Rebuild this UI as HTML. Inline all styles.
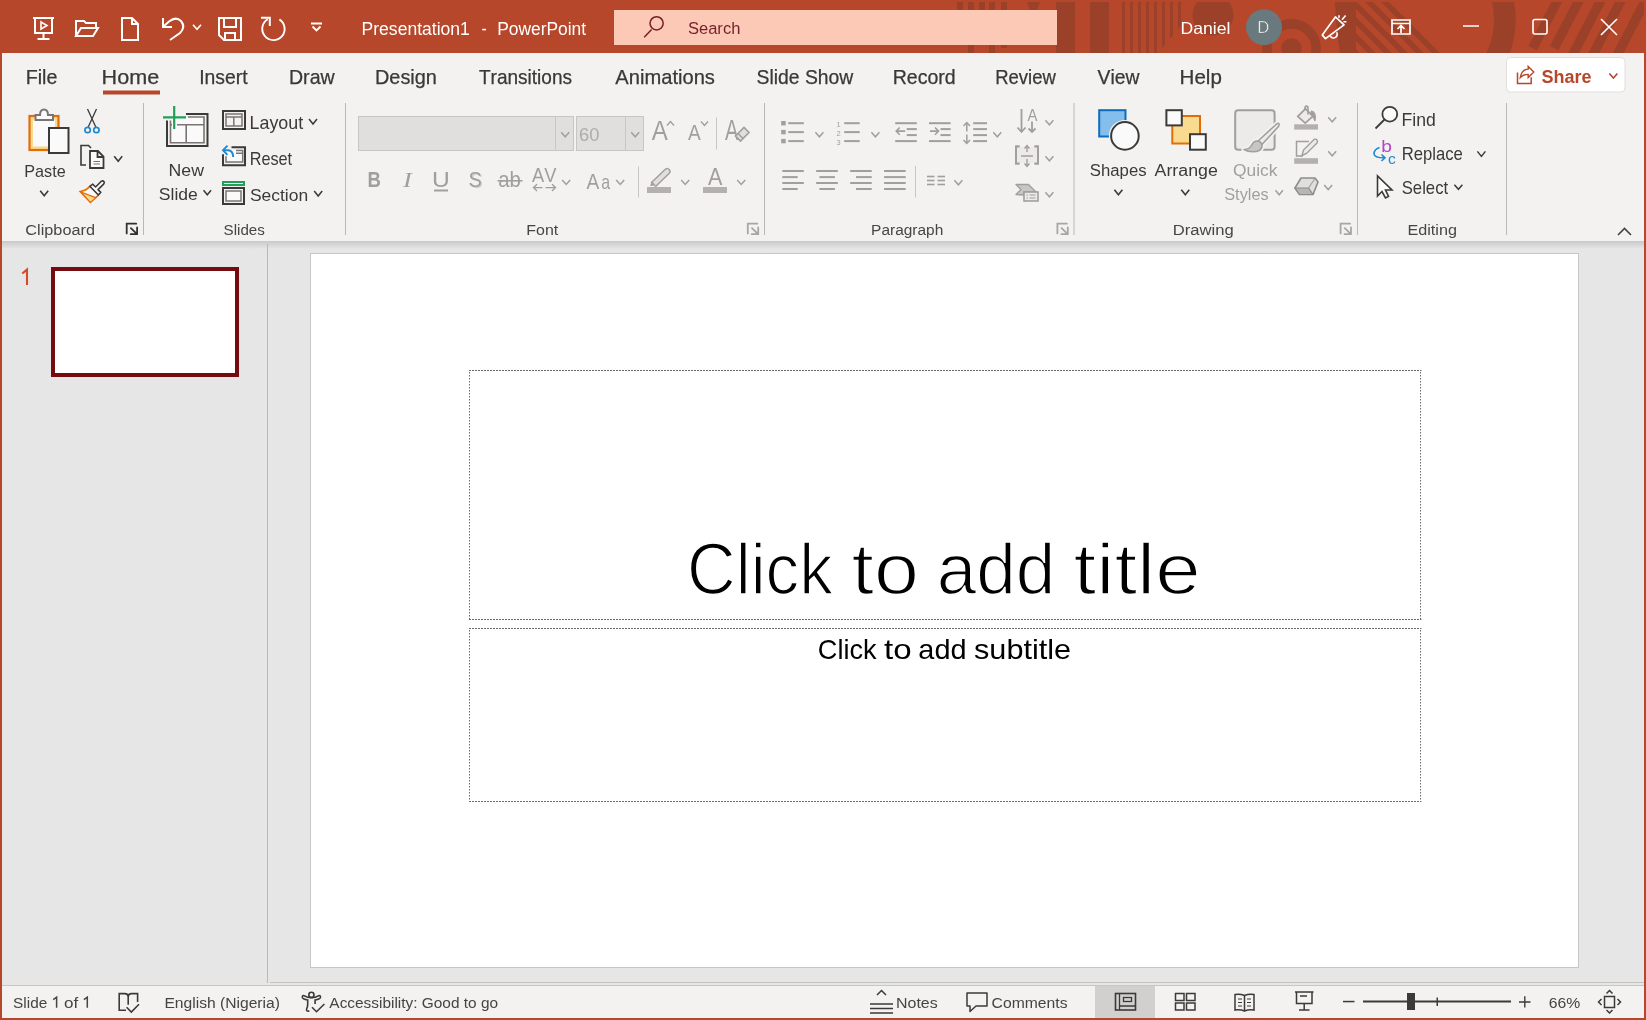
<!DOCTYPE html>
<html><head><meta charset="utf-8">
<style>
*{margin:0;padding:0}
html,body{width:1646px;height:1020px;overflow:hidden;background:#B7472A}
svg{position:absolute;left:0;top:0;display:block;will-change:transform}
text{font-kerning:none;white-space:pre}
</style></head><body>
<svg width="1646" height="1020" viewBox="0 0 1646 1020">
<rect x="0" y="0" width="1646" height="1020" fill="#B7472A" />
<rect x="2" y="53" width="1642" height="188" fill="#F3F2F1" />
<rect x="2" y="241" width="1642" height="745" fill="#E6E6E6" />
<defs><linearGradient id="sh" x1="0" y1="0" x2="0" y2="1"><stop offset="0" stop-color="#C9C9C9"/><stop offset="1" stop-color="#E6E6E6"/></linearGradient></defs>
<rect x="2" y="241" width="1642" height="8" fill="url(#sh)" />
<rect x="2" y="985" width="1642" height="1" fill="#C8C6C4" />
<rect x="2" y="986" width="1642" height="32" fill="#F3F2F1" />
<rect x="267" y="244" width="1" height="739" fill="#B9B9B9" />
<rect x="270" y="982" width="1374" height="1" fill="#C2C2C2" />
<defs><clipPath id="tbc"><rect x="0" y="2" width="1644" height="51"/></clipPath></defs><g clip-path="url(#tbc)" fill="#9C4129">
<rect x="957" y="2" width="6" height="9" fill="#9C4129" />
<rect x="968" y="2" width="6" height="9" fill="#9C4129" />
<rect x="979" y="2" width="6" height="9" fill="#9C4129" />
<rect x="989" y="2" width="6" height="9" fill="#9C4129" />
<rect x="1001" y="2" width="6" height="9" fill="#9C4129" />
<rect x="968" y="44" width="6" height="9" fill="#9C4129" />
<rect x="989" y="44" width="6" height="9" fill="#9C4129" />
<rect x="1001" y="44" width="6" height="4" fill="#9C4129" />
<polygon points="1027,2 1040,2 1037,10 1030,10"/>
<rect x="1056" y="2" width="19" height="51" fill="#9C4129" />
<rect x="1090" y="2" width="19" height="51" fill="#9C4129" />
<clipPath id="thin"><polygon points="1100,0 1190,0 1190,15 1158,53 1100,53"/></clipPath><g clip-path="url(#thin)">
<rect x="1122" y="2" width="3" height="51" fill="#9C4129" />
<rect x="1130" y="2" width="3" height="51" fill="#9C4129" />
<rect x="1138" y="2" width="3" height="51" fill="#9C4129" />
<rect x="1146" y="2" width="3" height="51" fill="#9C4129" />
<rect x="1154" y="2" width="3" height="51" fill="#9C4129" />
<rect x="1162" y="2" width="3" height="51" fill="#9C4129" />
<rect x="1170" y="2" width="3" height="51" fill="#9C4129" />
<rect x="1178" y="2" width="3" height="51" fill="#9C4129" />
</g>
<circle cx="1213" cy="15" r="20.5"/>
<circle cx="1291.5" cy="48.5" r="24.6" fill="none" stroke="#9C4129" stroke-width="9.6"/>
<circle cx="1291.5" cy="48.5" r="10.3"/>
<path d="M1335,2 L1357,2 L1356,10 L1356,53 L1340,53 Q1336,30 1335,2 Z"/>
<clipPath id="dg"><polygon points="1356,2 1400,2 1451,53 1356,53"/></clipPath><g clip-path="url(#dg)">
<polygon points="1301,2 1309,2 1360,53 1352,53"/>
<polygon points="1317,2 1325,2 1376,53 1368,53"/>
<polygon points="1333,2 1341,2 1392,53 1384,53"/>
<polygon points="1349,2 1357,2 1408,53 1400,53"/>
<polygon points="1365,2 1373,2 1424,53 1416,53"/>
<polygon points="1381,2 1389,2 1440,53 1432,53"/>
</g>
<clipPath id="arc"><rect x="1400" y="2" width="200" height="51"/></clipPath><circle cx="1422" cy="20" r="82.9" fill="none" stroke="#9C4129" stroke-width="21.7" clip-path="url(#arc)"/>
<polygon points="1551.4,2 1562.1000000000001,2 1536.8990196078432,50.5 1528.537254901961,46"/>
<polygon points="1572.8,2 1583.5,2 1558.299019607843,50.5 1549.9372549019608,46"/>
<polygon points="1594.7,2 1605.4,2 1578.9,53 1568.2,53"/>
<polygon points="1614.9,2 1625.6000000000001,2 1599.1000000000001,53 1588.4,53"/>
<polygon points="1639.4,2 1650.1000000000001,2 1623.6000000000001,53 1612.9,53"/>
</g>
<path d="M33,18 H54 M35,18 V33 H52 V18 M43.5,33 V39 M37.5,39 H49.5" stroke="#FFFFFF" stroke-width="2" fill="none" />
<path d="M41,22 L47,25.5 L41,29 Z" stroke="#FFFFFF" stroke-width="1.6" fill="none" />
<path d="M76,36 V21 H84 L86,23 H96 V28 M76,36 L81,28 H98 L93,36 Z" stroke="#FFFFFF" stroke-width="2" fill="none" stroke-linejoin="miter"/>
<path d="M122,18 H132 L138,24 V40 H122 Z M132,18 V24 H138" stroke="#FFFFFF" stroke-width="2" fill="none" />
<path d="M163,18 V27 H172 M163.5,26.5 L169,21.5 Q176,16 181,21 Q186,27 180,33 L170,40" stroke="#FFFFFF" stroke-width="2" fill="none" />
<path d="M193.0,24.75 L197,29.25 L201.0,24.75" stroke="#FFFFFF" stroke-width="1.6" fill="none" stroke-linecap="butt" stroke-linejoin="miter"/>
<path d="M219,18 H241 V40 H224 L219,35 Z M224,18 V27 H236 V18 M225,40 V33 H235 V40" stroke="#FFFFFF" stroke-width="2" fill="none" />
<path d="M261,17.8 H269.8 V26" stroke="#FFFFFF" stroke-width="2" fill="none" />
<path d="M279.4,19.4 A11.2,11.2 0 1 1 267.8,19.2" stroke="#FFFFFF" stroke-width="1.9" fill="none" />
<path d="M311,23.5 H322" stroke="#FFFFFF" stroke-width="2" fill="none" />
<path d="M312.5,26.5 L316.5,30.5 L320.5,26.5" stroke="#FFFFFF" stroke-width="1.8" fill="none" stroke-linecap="butt" stroke-linejoin="miter"/>
<text x="361.56" y="34.80" font-family="Liberation Sans" font-size="17.48" font-weight="normal" font-style="normal" fill="#FFFFFF" textLength="108.30" lengthAdjust="spacingAndGlyphs" >Presentation1</text>
<text x="481.51" y="34.80" font-family="Liberation Sans" font-size="18.53" font-weight="normal" font-style="normal" fill="#FFFFFF" textLength="5.18" lengthAdjust="spacingAndGlyphs" >-</text>
<text x="497.17" y="34.80" font-family="Liberation Sans" font-size="17.48" font-weight="normal" font-style="normal" fill="#FFFFFF" textLength="88.95" lengthAdjust="spacingAndGlyphs" >PowerPoint</text>
<rect x="614" y="10" width="443" height="35" fill="#FBC9B5" />
<path d="M644.2,37.3 L651.6,29.6" stroke="#781E2A" stroke-width="1.5" fill="none" />
<circle cx="656.6" cy="23.3" r="6.6" fill="none" stroke="#781E2A" stroke-width="1.5"/>
<text x="687.95" y="33.70" font-family="Liberation Sans" font-size="17.27" font-weight="normal" font-style="normal" fill="#781E2A" textLength="52.43" lengthAdjust="spacingAndGlyphs" >Search</text>
<text x="1180.56" y="33.90" font-family="Liberation Sans" font-size="17.13" font-weight="normal" font-style="normal" fill="#FFFFFF" textLength="49.92" lengthAdjust="spacingAndGlyphs" >Daniel</text>
<circle cx="1264" cy="27.2" r="18" fill="#69797E"/>
<text x="1257.33" y="33.30" font-family="Liberation Sans" font-size="16.72" font-weight="normal" font-style="normal" fill="#FFFFFF" textLength="12.07" lengthAdjust="spacingAndGlyphs"  stroke="#69797E" stroke-width="0.6">D</text>
<path d="M1322.3,35.1 L1335.4,16.9 L1344,24.9 L1325.5,38.6 Z" stroke="#FFFFFF" stroke-width="1.7" fill="none" stroke-linejoin="round"/>
<path d="M1330.3,36.3 A3.3,3.3 0 1 0 1336.6,32.2" stroke="#FFFFFF" stroke-width="1.6" fill="none" />
<path d="M1339,15.2 V17.8 M1342,19.8 L1345.6,15.6 M1343.4,21.7 H1346.4" stroke="#FFFFFF" stroke-width="1.6" fill="none" />
<path d="M1392,20 H1410 V34 H1392 Z M1392,23.5 H1410 M1401,33 V26 M1397.5,29 L1401,25.5 L1404.5,29" stroke="#FFFFFF" stroke-width="1.7" fill="none" />
<path d="M1463,26 H1479" stroke="#FFFFFF" stroke-width="1.5" fill="none" />
<rect x="1533" y="19.5" width="14" height="14.5" rx="2" fill="none" stroke="#FFFFFF" stroke-width="1.6"/>
<path d="M1601,19 L1617,35 M1617,19 L1601,35" stroke="#FFFFFF" stroke-width="1.6" fill="none" />
<text x="25.69" y="83.90" font-family="Liberation Sans" font-size="19.45" font-weight="normal" font-style="normal" fill="#383838" textLength="31.69" lengthAdjust="spacingAndGlyphs" stroke="#383838" stroke-width="0.25">File</text>
<text x="101.63" y="83.90" font-family="Liberation Sans" font-size="19.45" font-weight="normal" font-style="normal" fill="#383838" textLength="57.53" lengthAdjust="spacingAndGlyphs" stroke="#383838" stroke-width="0.25">Home</text>
<text x="199.21" y="83.90" font-family="Liberation Sans" font-size="19.45" font-weight="normal" font-style="normal" fill="#383838" textLength="48.43" lengthAdjust="spacingAndGlyphs" stroke="#383838" stroke-width="0.25">Insert</text>
<text x="288.99" y="83.90" font-family="Liberation Sans" font-size="19.45" font-weight="normal" font-style="normal" fill="#383838" textLength="45.66" lengthAdjust="spacingAndGlyphs" stroke="#383838" stroke-width="0.25">Draw</text>
<text x="374.97" y="83.90" font-family="Liberation Sans" font-size="19.45" font-weight="normal" font-style="normal" fill="#383838" textLength="61.92" lengthAdjust="spacingAndGlyphs" stroke="#383838" stroke-width="0.25">Design</text>
<text x="478.97" y="83.90" font-family="Liberation Sans" font-size="19.45" font-weight="normal" font-style="normal" fill="#383838" textLength="93.01" lengthAdjust="spacingAndGlyphs" stroke="#383838" stroke-width="0.25">Transitions</text>
<text x="615.36" y="83.90" font-family="Liberation Sans" font-size="19.45" font-weight="normal" font-style="normal" fill="#383838" textLength="99.57" lengthAdjust="spacingAndGlyphs" stroke="#383838" stroke-width="0.25">Animations</text>
<text x="756.62" y="83.90" font-family="Liberation Sans" font-size="19.45" font-weight="normal" font-style="normal" fill="#383838" textLength="96.73" lengthAdjust="spacingAndGlyphs" stroke="#383838" stroke-width="0.25">Slide Show</text>
<text x="892.70" y="83.90" font-family="Liberation Sans" font-size="19.45" font-weight="normal" font-style="normal" fill="#383838" textLength="62.96" lengthAdjust="spacingAndGlyphs" stroke="#383838" stroke-width="0.25">Record</text>
<text x="995.18" y="83.90" font-family="Liberation Sans" font-size="19.45" font-weight="normal" font-style="normal" fill="#383838" textLength="60.57" lengthAdjust="spacingAndGlyphs" stroke="#383838" stroke-width="0.25">Review</text>
<text x="1097.61" y="83.90" font-family="Liberation Sans" font-size="19.45" font-weight="normal" font-style="normal" fill="#383838" textLength="41.94" lengthAdjust="spacingAndGlyphs" stroke="#383838" stroke-width="0.25">View</text>
<text x="1179.61" y="83.90" font-family="Liberation Sans" font-size="19.45" font-weight="normal" font-style="normal" fill="#383838" textLength="42.25" lengthAdjust="spacingAndGlyphs" stroke="#383838" stroke-width="0.25">Help</text>
<rect x="103" y="90.5" width="57" height="4" fill="#B7472A" />
<rect x="1506.5" y="57.5" width="118.5" height="34.5" rx="4" fill="#FFFFFF" stroke="#E1DFDD" stroke-width="1"/>
<path d="M1517.5,72.6 V83.4 H1531.2 V77.2" stroke="#B7472A" stroke-width="1.5" fill="none" />
<path d="M1520.3,77.6 Q1521.5,69.4 1528.2,69.1 V66.5 L1533.8,72.1 L1528.2,77.6 V74.4 Q1523.5,74.2 1520.3,77.6 Z" stroke="#B7472A" stroke-width="1.4" fill="none" stroke-linejoin="miter"/>
<text x="1541.48" y="82.80" font-family="Liberation Sans" font-size="18.59" font-weight="bold" font-style="normal" fill="#B7472A" textLength="50.03" lengthAdjust="spacingAndGlyphs" >Share</text>
<path d="M1609.4,73.45 L1613.4,77.95 L1617.4,73.45" stroke="#B7472A" stroke-width="1.6" fill="none" stroke-linecap="butt" stroke-linejoin="miter"/>
<text x="25.37" y="234.90" font-family="Liberation Sans" font-size="14.89" font-weight="normal" font-style="normal" fill="#484644" textLength="69.57" lengthAdjust="spacingAndGlyphs" >Clipboard</text>
<text x="223.61" y="234.90" font-family="Liberation Sans" font-size="14.89" font-weight="normal" font-style="normal" fill="#484644" textLength="41.23" lengthAdjust="spacingAndGlyphs" >Slides</text>
<text x="526.29" y="234.90" font-family="Liberation Sans" font-size="14.89" font-weight="normal" font-style="normal" fill="#484644" textLength="31.93" lengthAdjust="spacingAndGlyphs" >Font</text>
<text x="871.13" y="234.90" font-family="Liberation Sans" font-size="14.89" font-weight="normal" font-style="normal" fill="#484644" textLength="72.17" lengthAdjust="spacingAndGlyphs" >Paragraph</text>
<text x="1172.84" y="234.90" font-family="Liberation Sans" font-size="14.89" font-weight="normal" font-style="normal" fill="#484644" textLength="60.93" lengthAdjust="spacingAndGlyphs" >Drawing</text>
<text x="1407.47" y="234.90" font-family="Liberation Sans" font-size="14.89" font-weight="normal" font-style="normal" fill="#484644" textLength="49.47" lengthAdjust="spacingAndGlyphs" >Editing</text>
<rect x="143.0" y="103" width="1" height="132" fill="#BAB8B6" />
<rect x="345.0" y="103" width="1" height="132" fill="#BAB8B6" />
<rect x="764.0" y="103" width="1" height="132" fill="#BAB8B6" />
<rect x="1073.5" y="103" width="1" height="132" fill="#BAB8B6" />
<rect x="1357.0" y="103" width="1" height="132" fill="#BAB8B6" />
<rect x="1506.0" y="103" width="1" height="132" fill="#BAB8B6" />
<path d="M1618,235 L1624.5,228.5 L1631,235" stroke="#444" stroke-width="1.6" fill="none" />
<path d="M126.7,233.4 V223.7 H136.2" stroke="#323130" stroke-width="1.8" fill="none" stroke-linecap="round"/>
<path d="M130.9,228.2 L136.5,233.6 M137.1,227.5 V234.2 H130.7" stroke="#323130" stroke-width="1.8" fill="none" stroke-linecap="round" stroke-linejoin="round"/>
<path d="M747.8,233.4 V223.7 H757.3" stroke="#A8A6A4" stroke-width="1.8" fill="none" stroke-linecap="round"/>
<path d="M752.0,228.2 L757.5999999999999,233.6 M758.1999999999999,227.5 V234.2 H751.8" stroke="#A8A6A4" stroke-width="1.8" fill="none" stroke-linecap="round" stroke-linejoin="round"/>
<path d="M1057.4,233.4 V223.7 H1066.9" stroke="#A8A6A4" stroke-width="1.8" fill="none" stroke-linecap="round"/>
<path d="M1061.6000000000001,228.2 L1067.2,233.6 M1067.8000000000002,227.5 V234.2 H1061.4" stroke="#A8A6A4" stroke-width="1.8" fill="none" stroke-linecap="round" stroke-linejoin="round"/>
<path d="M1340.6,233.4 V223.7 H1350.1" stroke="#A8A6A4" stroke-width="1.8" fill="none" stroke-linecap="round"/>
<path d="M1344.8,228.2 L1350.3999999999999,233.6 M1351.0,227.5 V234.2 H1344.6" stroke="#A8A6A4" stroke-width="1.8" fill="none" stroke-linecap="round" stroke-linejoin="round"/>
<rect x="310.5" y="253.5" width="1268" height="714" fill="#FFFFFF" stroke="#C6C6C6" stroke-width="1"/>
<rect x="53" y="269" width="184" height="106" fill="#FFFFFF" stroke="#750B0E" stroke-width="4"/>
<path d="M22.3,273.5 L27,269.6 V285" stroke="#D84A27" stroke-width="2.1" fill="none" stroke-linejoin="miter"/>
<path d="M469,370.5 H1421.5 M469,619.5 H1421.5" stroke="#6A6A6A" stroke-width="1" fill="none" stroke-dasharray="2,1"/>
<path d="M469.5,372.0 V619.5 M1420.5,372.0 V619.5" stroke="#6A6A6A" stroke-width="1" fill="none" stroke-dasharray="1.5,1.5"/>
<path d="M469,628.5 H1421.5 M469,801.5 H1421.5" stroke="#6A6A6A" stroke-width="1" fill="none" stroke-dasharray="2,1"/>
<path d="M469.5,630.0 V801.5 M1420.5,630.0 V801.5" stroke="#6A6A6A" stroke-width="1" fill="none" stroke-dasharray="1.5,1.5"/>
<text x="687.08" y="593.60" font-family="Liberation Sans" font-size="72.74" font-weight="normal" font-style="normal" fill="#000000" textLength="145.82" lengthAdjust="spacingAndGlyphs"  stroke="#FFFFFF" stroke-width="1.6">Click</text>
<text x="851.58" y="593.60" font-family="Liberation Sans" font-size="72.74" font-weight="normal" font-style="normal" fill="#000000" textLength="67.42" lengthAdjust="spacingAndGlyphs"  stroke="#FFFFFF" stroke-width="1.6">to</text>
<text x="936.68" y="593.60" font-family="Liberation Sans" font-size="72.74" font-weight="normal" font-style="normal" fill="#000000" textLength="118.71" lengthAdjust="spacingAndGlyphs"  stroke="#FFFFFF" stroke-width="1.6">add</text>
<text x="1073.56" y="593.60" font-family="Liberation Sans" font-size="72.74" font-weight="normal" font-style="normal" fill="#000000" textLength="127.17" lengthAdjust="spacingAndGlyphs"  stroke="#FFFFFF" stroke-width="1.6">title</text>
<text x="817.82" y="658.80" font-family="Liberation Sans" font-size="27.77" font-weight="normal" font-style="normal" fill="#000000" textLength="58.74" lengthAdjust="spacingAndGlyphs" >Click</text>
<text x="884.00" y="658.80" font-family="Liberation Sans" font-size="27.77" font-weight="normal" font-style="normal" fill="#000000" textLength="27.59" lengthAdjust="spacingAndGlyphs" >to</text>
<text x="918.37" y="658.80" font-family="Liberation Sans" font-size="27.77" font-weight="normal" font-style="normal" fill="#000000" textLength="48.19" lengthAdjust="spacingAndGlyphs" >add</text>
<text x="974.05" y="658.80" font-family="Liberation Sans" font-size="27.77" font-weight="normal" font-style="normal" fill="#000000" textLength="97.11" lengthAdjust="spacingAndGlyphs" >subtitle</text>
<text x="13.10" y="1007.80" font-family="Liberation Sans" font-size="15.07" font-weight="normal" font-style="normal" fill="#444" textLength="34.18" lengthAdjust="spacingAndGlyphs" >Slide</text>
<text x="63.99" y="1007.80" font-family="Liberation Sans" font-size="15.07" font-weight="normal" font-style="normal" fill="#444" textLength="14.19" lengthAdjust="spacingAndGlyphs" >of</text>
<path d="M53.2,999.6 L56.6,997.2 V1007.8 M83.9,999.6 L87.3,997.2 V1007.8" stroke="#444" stroke-width="1.5" fill="none" stroke-linejoin="miter"/>
<text x="164.42" y="1007.80" font-family="Liberation Sans" font-size="15.07" font-weight="normal" font-style="normal" fill="#444" textLength="115.55" lengthAdjust="spacingAndGlyphs" >English (Nigeria)</text>
<text x="329.37" y="1007.80" font-family="Liberation Sans" font-size="15.07" font-weight="normal" font-style="normal" fill="#444" textLength="168.68" lengthAdjust="spacingAndGlyphs" >Accessibility: Good to go</text>
<text x="895.99" y="1007.80" font-family="Liberation Sans" font-size="15.07" font-weight="normal" font-style="normal" fill="#444" textLength="41.69" lengthAdjust="spacingAndGlyphs" >Notes</text>
<text x="991.60" y="1007.80" font-family="Liberation Sans" font-size="15.07" font-weight="normal" font-style="normal" fill="#444" textLength="75.97" lengthAdjust="spacingAndGlyphs" >Comments</text>
<text x="1548.70" y="1007.80" font-family="Liberation Sans" font-size="15.07" font-weight="normal" font-style="normal" fill="#444" textLength="31.46" lengthAdjust="spacingAndGlyphs" >66%</text>
<rect x="1095" y="986" width="60" height="32" fill="#D2D0CE" />
<rect x="29.5" y="116" width="29" height="34" fill="#F8D98B" stroke="#E36C0A" stroke-width="2.2"/>
<rect x="33" y="119.5" width="22" height="27" fill="#FAFAFA" />
<path d="M35.5,120 V115 H40 Q40,109.5 44,109.5 Q48,109.5 48,115 H53 V120 Z" stroke="#7A7574" stroke-width="2" fill="#FAFAFA" />
<rect x="49" y="128" width="19.5" height="25" fill="#FAFAFA" stroke="#3B3A39" stroke-width="2"/>
<text x="24.27" y="176.70" font-family="Liberation Sans" font-size="17.39" font-weight="normal" font-style="normal" fill="#3B3A39" textLength="41.45" lengthAdjust="spacingAndGlyphs" >Paste</text>
<path d="M40.2,190.7 L44.2,195.7 L48.2,190.7" stroke="#3B3A39" stroke-width="1.6" fill="none" stroke-linecap="butt" stroke-linejoin="miter"/>
<path d="M87.5,109 L96,127.5 M96.5,109 L88,127.5" stroke="#3B3A39" stroke-width="1.3" fill="none" />
<circle cx="87.6" cy="130" r="2.7" fill="none" stroke="#1F8AD2" stroke-width="1.7"/><circle cx="96.4" cy="130" r="2.7" fill="none" stroke="#1F8AD2" stroke-width="1.7"/>
<path d="M86,165 H81 V145.5 H88.5 L91,148" stroke="#3B3A39" stroke-width="1.6" fill="none" />
<path d="M90,168 V151 H98 L103.5,156.5 V168 Z M97.5,151 V157 H103.5" stroke="#3B3A39" stroke-width="1.8" fill="#FAFAFA" />
<path d="M93.5,161.5 H100 M93.5,164 H100" stroke="#7A7574" stroke-width="1.2" fill="none" />
<path d="M114.2,156.2 L118.2,161.2 L122.2,156.2" stroke="#3B3A39" stroke-width="1.6" fill="none" stroke-linecap="butt" stroke-linejoin="miter"/>
<path d="M89.8,186.3 Q86.5,190.5 80.3,191.6 L90.4,202.3 L98.5,195.1" stroke="#E36C0A" stroke-width="1.7" fill="#FAFAFA" stroke-linejoin="miter"/>
<path d="M84.2,194.3 L95.2,197.5 L90.4,201.6 Z" stroke="none" stroke-width="0" fill="#F8D98B" />
<path d="M81,192.1 L95.6,197.6" stroke="#E36C0A" stroke-width="1.5" fill="none" />
<path d="M89.8,186.3 L92.8,184.2 L95.6,187 L101.3,181.3 Q102.8,180.2 103.9,181.5 Q104.9,182.8 103.6,184.1 L98,189.6 L100.8,192.3 L98.4,195 Z" stroke="#3B3A39" stroke-width="1.6" fill="#FAFAFA" stroke-linejoin="round"/>
<rect x="170" y="117" width="34" height="25.7" fill="#FAFAFA" />
<path d="M167,120.5 V146 H207.5 V114 H186" stroke="#3B3A39" stroke-width="2" fill="none" />
<path d="M170.5,120.5 V142.7 H204 V117 H188 M177,124.8 H204 M186.2,124.8 V142.7 M170.5,124.8 H172" stroke="#7A7574" stroke-width="1.6" fill="none" />
<path d="M174.2,106 V129 M163,117.3 H186" stroke="#21A05A" stroke-width="2.2" fill="none" />
<text x="168.55" y="175.70" font-family="Liberation Sans" font-size="17.39" font-weight="normal" font-style="normal" fill="#3B3A39" textLength="35.41" lengthAdjust="spacingAndGlyphs" >New</text>
<text x="158.80" y="199.70" font-family="Liberation Sans" font-size="17.39" font-weight="normal" font-style="normal" fill="#3B3A39" textLength="38.97" lengthAdjust="spacingAndGlyphs" >Slide</text>
<path d="M203.55,190.25 L207.3,194.75 L211.05,190.25" stroke="#3B3A39" stroke-width="1.5" fill="none" stroke-linecap="butt" stroke-linejoin="miter"/>
<rect x="223" y="111" width="22" height="18" fill="none" stroke="#3B3A39" stroke-width="2"/>
<rect x="226" y="114" width="16" height="12" fill="none" stroke="#7A7574" stroke-width="1.5"/>
<path d="M226,117 H242 M233.8,117 V126" stroke="#7A7574" stroke-width="1.5" fill="none" />
<text x="249.54" y="128.80" font-family="Liberation Sans" font-size="17.73" font-weight="normal" font-style="normal" fill="#3B3A39" textLength="53.60" lengthAdjust="spacingAndGlyphs" >Layout</text>
<path d="M309.0,119.0 L313,124.0 L317.0,119.0" stroke="#3B3A39" stroke-width="1.5" fill="none" stroke-linecap="butt" stroke-linejoin="miter"/>
<rect x="226" y="150" width="17" height="12" fill="#FAFAFA" />
<path d="M231.5,147.3 H245 V165.3 H223 V154.2" stroke="#3B3A39" stroke-width="2" fill="none" />
<path d="M236,150.5 H242.7 V162 H226 V156.2 M236,153.3 H242.7" stroke="#7A7574" stroke-width="1.5" fill="none" />
<path d="M223,150.2 H228 Q233,150.5 233.2,157" stroke="#1F8AD2" stroke-width="1.9" fill="none" />
<path d="M227.5,145.6 L223,150.2 L227.5,154.8" stroke="#1F8AD2" stroke-width="1.9" fill="none" />
<text x="249.67" y="165.00" font-family="Liberation Sans" font-size="17.53" font-weight="normal" font-style="normal" fill="#3B3A39" textLength="42.45" lengthAdjust="spacingAndGlyphs" >Reset</text>
<rect x="223" y="182" width="21" height="3" fill="#FAFAFA" stroke="#21A05A" stroke-width="2"/>
<rect x="223" y="188" width="21" height="16" fill="none" stroke="#3B3A39" stroke-width="2"/>
<rect x="226" y="191" width="15" height="10" fill="#FAFAFA" stroke="#7A7574" stroke-width="1.5"/>
<text x="249.91" y="200.80" font-family="Liberation Sans" font-size="17.39" font-weight="normal" font-style="normal" fill="#3B3A39" textLength="58.23" lengthAdjust="spacingAndGlyphs" >Section</text>
<path d="M314.2,191.0 L318.2,196.0 L322.2,191.0" stroke="#3B3A39" stroke-width="1.5" fill="none" stroke-linecap="butt" stroke-linejoin="miter"/>
<rect x="358.5" y="116.5" width="215" height="34" fill="#E1DFDD" stroke="#C8C6C4" stroke-width="1"/>
<rect x="555" y="117" width="1" height="33" fill="#C8C6C4" />
<path d="M561.2,132.25 L565.2,136.75 L569.2,132.25" stroke="#A19F9D" stroke-width="1.5" fill="none" stroke-linecap="butt" stroke-linejoin="miter"/>
<rect x="576.5" y="116.5" width="67" height="34" fill="#E1DFDD" stroke="#C8C6C4" stroke-width="1"/>
<rect x="625" y="117" width="1" height="33" fill="#C8C6C4" />
<path d="M631.2,132.25 L635.2,136.75 L639.2,132.25" stroke="#A19F9D" stroke-width="1.5" fill="none" stroke-linecap="butt" stroke-linejoin="miter"/>
<text x="579.07" y="140.80" font-family="Liberation Sans" font-size="18.60" font-weight="normal" font-style="normal" fill="#ADADAD" textLength="20.34" lengthAdjust="spacingAndGlyphs" >60</text>
<text x="651.75" y="139.80" font-family="Liberation Sans" font-size="28.34" font-weight="normal" font-style="normal" fill="#A19F9D" textLength="16.09" lengthAdjust="spacingAndGlyphs" >A</text>
<path d="M667,125.5 L670.5,121.5 L674,125.5" stroke="#A19F9D" stroke-width="1.4" fill="none" />
<text x="687.96" y="139.80" font-family="Liberation Sans" font-size="22.24" font-weight="normal" font-style="normal" fill="#A19F9D" textLength="12.77" lengthAdjust="spacingAndGlyphs" >A</text>
<path d="M701,121.5 L704.5,125.5 L708,121.5" stroke="#A19F9D" stroke-width="1.4" fill="none" />
<rect x="716" y="117.5" width="1" height="32" fill="#C8C6C4" />
<text x="724.96" y="140.00" font-family="Liberation Sans" font-size="29.07" font-weight="normal" font-style="normal" fill="#A19F9D" textLength="13.48" lengthAdjust="spacingAndGlyphs" >A</text>
<path d="M735.5,136 L744,127.5 L749,132.5 L740.5,141 Z M738,133.5 L743,138.5" stroke="#A19F9D" stroke-width="1.6" fill="#E1DFDD" />
<text x="367.46" y="186.90" font-family="Liberation Sans" font-size="21.66" font-weight="bold" font-style="normal" fill="#A19F9D" textLength="13.38" lengthAdjust="spacingAndGlyphs" >B</text>
<text x="403.10" y="187.00" font-family="Liberation Serif" font-size="21.80" font-weight="normal" font-style="italic" fill="#A19F9D" textLength="8.86" lengthAdjust="spacingAndGlyphs" >I</text>
<text x="432.10" y="187.00" font-family="Liberation Sans" font-size="21.80" font-weight="normal" font-style="normal" fill="#A19F9D" textLength="17.80" lengthAdjust="spacingAndGlyphs" >U</text>
<rect x="434" y="189.5" width="14" height="2" fill="#A19F9D" />
<text x="470.13" y="188.00" font-family="Liberation Sans" font-size="21.80" font-weight="normal" font-style="normal" fill="#D0CFCE" textLength="12.74" lengthAdjust="spacingAndGlyphs" >S</text>
<text x="468.59" y="187.00" font-family="Liberation Sans" font-size="21.80" font-weight="normal" font-style="normal" fill="#A19F9D" textLength="13.32" lengthAdjust="spacingAndGlyphs" >S</text>
<text x="498.13" y="187.00" font-family="Liberation Sans" font-size="21.80" font-weight="normal" font-style="normal" fill="#A19F9D" textLength="22.73" lengthAdjust="spacingAndGlyphs" >ab</text>
<rect x="497.5" y="180" width="25" height="1.6" fill="#A19F9D" />
<text x="531.96" y="182.40" font-family="Liberation Sans" font-size="19.91" font-weight="normal" font-style="normal" fill="#A19F9D" textLength="24.42" lengthAdjust="spacingAndGlyphs" >AV</text>
<path d="M533.5,187.6 H542.5 M545.5,187.6 H555.5 M537,184.2 L533.5,187.6 L537,191 M552,184.2 L555.5,187.6 L552,191" stroke="#A19F9D" stroke-width="1.4" fill="none" />
<path d="M562.2,179.95 L566.2,184.45 L570.2,179.95" stroke="#A19F9D" stroke-width="1.5" fill="none" stroke-linecap="butt" stroke-linejoin="miter"/>
<text x="586.46" y="188.50" font-family="Liberation Sans" font-size="21.80" font-weight="normal" font-style="normal" fill="#A19F9D" textLength="12.77" lengthAdjust="spacingAndGlyphs" >A</text>
<text x="601.22" y="188.50" font-family="Liberation Sans" font-size="20.64" font-weight="normal" font-style="normal" fill="#A19F9D" textLength="8.88" lengthAdjust="spacingAndGlyphs" >a</text>
<path d="M616.2,179.95 L620.2,184.45 L624.2,179.95" stroke="#A19F9D" stroke-width="1.5" fill="none" stroke-linecap="butt" stroke-linejoin="miter"/>
<rect x="638" y="166.5" width="1" height="31" fill="#C8C6C4" />
<path d="M651,183 L665,169.5 Q668,167.5 669.5,170 Q671,172 668.5,174 L655,187" stroke="#A19F9D" stroke-width="1.5" fill="#E1DFDD" />
<path d="M650,186 L652,181.5 L656,185.5 Z" stroke="none" stroke-width="0" fill="#A19F9D" />
<rect x="647" y="187" width="24" height="6" fill="#B3B0AD" />
<path d="M681.2,179.95 L685.2,184.45 L689.2,179.95" stroke="#A19F9D" stroke-width="1.5" fill="none" stroke-linecap="butt" stroke-linejoin="miter"/>
<text x="707.96" y="185.00" font-family="Liberation Sans" font-size="23.26" font-weight="normal" font-style="normal" fill="#A19F9D" textLength="14.38" lengthAdjust="spacingAndGlyphs" >A</text>
<rect x="703" y="187" width="24" height="6" fill="#B3B0AD" />
<path d="M737.2,179.95 L741.2,184.45 L745.2,179.95" stroke="#A19F9D" stroke-width="1.5" fill="none" stroke-linecap="butt" stroke-linejoin="miter"/>
<rect x="781.2" y="121.0" width="4.5" height="4.4" fill="#A19F9D" />
<rect x="788.2" y="122.2" width="15.6" height="2" fill="#A19F9D" />
<rect x="781.2" y="129.9" width="4.5" height="4.4" fill="#A19F9D" />
<rect x="788.2" y="131.1" width="15.6" height="2" fill="#A19F9D" />
<rect x="781.2" y="138.9" width="4.5" height="4.4" fill="#A19F9D" />
<rect x="788.2" y="140.1" width="15.6" height="2" fill="#A19F9D" />
<path d="M815.4,132.25 L819.4,136.75 L823.4,132.25" stroke="#A19F9D" stroke-width="1.5" fill="none" stroke-linecap="butt" stroke-linejoin="miter"/>
<rect x="844.2" y="122.2" width="15.5" height="2" fill="#A19F9D" />
<rect x="844.2" y="131.1" width="15.5" height="2" fill="#A19F9D" />
<rect x="844.2" y="140.1" width="15.5" height="2" fill="#A19F9D" />
<text x="836.5" y="127" font-family="Liberation Sans" font-size="7.5" fill="#A19F9D">1</text><text x="836.5" y="136" font-family="Liberation Sans" font-size="7.5" fill="#A19F9D">2</text><text x="836.5" y="145" font-family="Liberation Sans" font-size="7.5" fill="#A19F9D">3</text>
<path d="M871.4,132.25 L875.4,136.75 L879.4,132.25" stroke="#A19F9D" stroke-width="1.5" fill="none" stroke-linecap="butt" stroke-linejoin="miter"/>
<rect x="895.2" y="122.2" width="21.6" height="2" fill="#A19F9D" />
<rect x="895.2" y="140.1" width="21.6" height="2" fill="#A19F9D" />
<rect x="906.7" y="128.1" width="10.1" height="2" fill="#A19F9D" />
<rect x="906.7" y="134.1" width="10.1" height="2" fill="#A19F9D" />
<path d="M905.2,131.1 H896.2 M899.7,127.5 L896.2,131.1 L899.7,134.7" stroke="#A19F9D" stroke-width="1.6" fill="none" />
<rect x="929" y="122.2" width="21.6" height="2" fill="#A19F9D" />
<rect x="929" y="140.1" width="21.6" height="2" fill="#A19F9D" />
<rect x="940.5" y="128.1" width="10.1" height="2" fill="#A19F9D" />
<rect x="940.5" y="134.1" width="10.1" height="2" fill="#A19F9D" />
<path d="M930,131.1 H938.5 M935,127.5 L938.5,131.1 L935,134.7" stroke="#A19F9D" stroke-width="1.6" fill="none" />
<path d="M966.8,123 V131.5 M966.8,134.5 V143 M963.5,126 L966.8,122.5 L970,126 M963.5,140 L966.8,143.5 L970,140" stroke="#A19F9D" stroke-width="1.5" fill="none" />
<rect x="973.2" y="122.2" width="13.8" height="2" fill="#A19F9D" />
<rect x="973.2" y="128.1" width="13.8" height="2" fill="#A19F9D" />
<rect x="973.2" y="134.1" width="13.8" height="2" fill="#A19F9D" />
<rect x="973.2" y="140.1" width="13.8" height="2" fill="#A19F9D" />
<path d="M993.3,132.25 L997.3,136.75 L1001.3,132.25" stroke="#A19F9D" stroke-width="1.5" fill="none" stroke-linecap="butt" stroke-linejoin="miter"/>
<path d="M1021.5,109 V132 M1017.5,127.5 L1021.5,132 L1025.5,127.5 M1032,121.5 V132 M1028.5,128.5 L1032,132 L1035.5,128.5" stroke="#A19F9D" stroke-width="1.8" fill="none" />
<text x="1027.47" y="120.50" font-family="Liberation Sans" font-size="15.99" font-weight="normal" font-style="normal" fill="#A19F9D" textLength="9.96" lengthAdjust="spacingAndGlyphs" >A</text>
<path d="M1045.4,120.25 L1049.4,124.75 L1053.4,120.25" stroke="#A19F9D" stroke-width="1.5" fill="none" stroke-linecap="butt" stroke-linejoin="miter"/>
<path d="M1019.5,146.5 H1016 V163.5 H1019.5 M1034.5,146.5 H1038 V163.5 H1034.5" stroke="#A19F9D" stroke-width="1.8" fill="none" />
<rect x="1017" y="147" width="20" height="16" fill="#ECEBEA" />
<path d="M1019.5,146.5 H1016 V163.5 H1019.5 M1034.5,146.5 H1038 V163.5 H1034.5" stroke="#A19F9D" stroke-width="1.8" fill="none" />
<path d="M1021,156 H1033 M1027,146 V152 M1027,159 V166 M1024.5,148.5 L1027,145.5 L1029.5,148.5 M1024.5,163.5 L1027,166.5 L1029.5,163.5" stroke="#A19F9D" stroke-width="1.4" fill="none" />
<path d="M1045.4,156.25 L1049.4,160.75 L1053.4,156.25" stroke="#A19F9D" stroke-width="1.5" fill="none" stroke-linecap="butt" stroke-linejoin="miter"/>
<path d="M1016,184.5 H1028.5 L1036,192 H1024 V195 L1016,194.5 L1021,189.5 Z" stroke="#A19F9D" stroke-width="1.3" fill="#C8C6C4" stroke-linejoin="round"/>
<rect x="1024" y="192" width="14" height="9" fill="#ECEBEA" stroke="#A19F9D" stroke-width="1.6"/>
<path d="M1026.5,195 H1028 M1029.5,195 H1035.5 M1026.5,198 H1028 M1029.5,198 H1035.5" stroke="#A19F9D" stroke-width="1.1" fill="none" />
<path d="M1045.4,192.25 L1049.4,196.75 L1053.4,192.25" stroke="#A19F9D" stroke-width="1.5" fill="none" stroke-linecap="butt" stroke-linejoin="miter"/>
<rect x="782.3" y="170" width="21.5" height="2" fill="#A19F9D" />
<rect x="782.3" y="176.1" width="15.4" height="2" fill="#A19F9D" />
<rect x="782.3" y="182" width="21.5" height="2" fill="#A19F9D" />
<rect x="782.3" y="188" width="15.4" height="2" fill="#A19F9D" />
<rect x="816.2" y="170" width="21.6" height="2" fill="#A19F9D" />
<rect x="819.4000000000001" y="176.1" width="15.5" height="2" fill="#A19F9D" />
<rect x="816.2" y="182" width="21.6" height="2" fill="#A19F9D" />
<rect x="819.4000000000001" y="188" width="15.5" height="2" fill="#A19F9D" />
<rect x="850.2" y="170" width="21.5" height="2" fill="#A19F9D" />
<rect x="856.0" y="176.1" width="15.7" height="2" fill="#A19F9D" />
<rect x="850.2" y="182" width="21.5" height="2" fill="#A19F9D" />
<rect x="856.0" y="188" width="15.7" height="2" fill="#A19F9D" />
<rect x="884.1" y="170" width="21.6" height="2" fill="#A19F9D" />
<rect x="884.1" y="176.1" width="21.6" height="2" fill="#A19F9D" />
<rect x="884.1" y="182" width="21.6" height="2" fill="#A19F9D" />
<rect x="884.1" y="188" width="21.6" height="2" fill="#A19F9D" />
<rect x="915" y="166" width="1" height="31.5" fill="#C8C6C4" />
<rect x="927" y="175.7" width="7.5" height="1.6" fill="#A19F9D" />
<rect x="937.5" y="175.7" width="7.5" height="1.6" fill="#A19F9D" />
<rect x="927" y="179.7" width="7.5" height="1.6" fill="#A19F9D" />
<rect x="937.5" y="179.7" width="7.5" height="1.6" fill="#A19F9D" />
<rect x="927" y="183.7" width="7.5" height="1.6" fill="#A19F9D" />
<rect x="937.5" y="183.7" width="7.5" height="1.6" fill="#A19F9D" />
<path d="M954.4,180.25 L958.4,184.75 L962.4,180.25" stroke="#A19F9D" stroke-width="1.5" fill="none" stroke-linecap="butt" stroke-linejoin="miter"/>
<rect x="1099.2" y="110.2" width="26.3" height="26.3" fill="#83BEEC" stroke="#0F6CBD" stroke-width="2"/>
<circle cx="1124.9" cy="135.9" r="16" fill="#F3F2F1"/><circle cx="1124.9" cy="135.9" r="13.8" fill="#FAFAFA" stroke="#3B3A39" stroke-width="2"/>
<text x="1089.84" y="175.70" font-family="Liberation Sans" font-size="17.25" font-weight="normal" font-style="normal" fill="#3B3A39" textLength="56.76" lengthAdjust="spacingAndGlyphs" >Shapes</text>
<path d="M1114.4,189.8 L1118.4,194.8 L1122.4,189.8" stroke="#3B3A39" stroke-width="1.6" fill="none" stroke-linecap="butt" stroke-linejoin="miter"/>
<rect x="1172.3" y="116" width="27.7" height="27.5" fill="#F8DB8F" stroke="#E36C0A" stroke-width="2"/>
<rect x="1166.4" y="110.2" width="15.4" height="15.2" fill="#FAFAFA" stroke="#3B3A39" stroke-width="2"/>
<rect x="1190" y="134.2" width="15.8" height="15.5" fill="#FAFAFA" stroke="#3B3A39" stroke-width="2"/>
<text x="1154.57" y="175.70" font-family="Liberation Sans" font-size="17.25" font-weight="normal" font-style="normal" fill="#3B3A39" textLength="63.22" lengthAdjust="spacingAndGlyphs" >Arrange</text>
<path d="M1181.3,189.8 L1185.3,194.8 L1189.3,189.8" stroke="#3B3A39" stroke-width="1.6" fill="none" stroke-linecap="butt" stroke-linejoin="miter"/>
<rect x="1235.2" y="110.2" width="39.4" height="39.5" rx="3" fill="#ECEBEA" stroke="#A19F9D" stroke-width="2"/>
<path d="M1257.5,141.5 L1276,124.5 Q1280.5,121.5 1278.5,126.5 L1261,145.5 Z" stroke="#F3F2F1" stroke-width="5" fill="#F3F2F1" stroke-linejoin="round"/>
<path d="M1244,149.5 Q1249.5,149.5 1252,144.5 Q1254,140.5 1258,141 Q1262.5,142.5 1262,147 Q1260.5,151.8 1253,151.8 Q1247.5,151.8 1244,149.5 Z" stroke="#F3F2F1" stroke-width="5" fill="#F3F2F1" stroke-linejoin="round"/>
<path d="M1257.5,141.5 L1276,124.5 Q1280.5,121.5 1278.5,126.5 L1261,145.5 Z" stroke="#A19F9D" stroke-width="1.6" fill="#ECEBEA" stroke-linejoin="round"/>
<path d="M1244,149.5 Q1249.5,149.5 1252,144.5 Q1254,140.5 1258,141 Q1262.5,142.5 1262,147 Q1260.5,151.8 1253,151.8 Q1247.5,151.8 1244,149.5 Z" stroke="#A19F9D" stroke-width="1.5" fill="#C8C6C4" stroke-linejoin="round"/>
<text x="1233.08" y="175.70" font-family="Liberation Sans" font-size="17.25" font-weight="normal" font-style="normal" fill="#A19F9D" textLength="44.40" lengthAdjust="spacingAndGlyphs" >Quick</text>
<text x="1224.26" y="199.70" font-family="Liberation Sans" font-size="17.39" font-weight="normal" font-style="normal" fill="#A19F9D" textLength="44.33" lengthAdjust="spacingAndGlyphs" >Styles</text>
<path d="M1275.45,190.25 L1279.2,194.75 L1282.95,190.25" stroke="#A19F9D" stroke-width="1.5" fill="none" stroke-linecap="butt" stroke-linejoin="miter"/>
<path d="M1297.8,116.4 L1305.5,108.8 L1313,116.2 L1305.2,123.2 Z" stroke="#A19F9D" stroke-width="1.7" fill="#ECEBEA" stroke-linejoin="miter"/>
<path d="M1305,110 V107.2 Q1306.5,105 1308,107.2 V114.5" stroke="#A19F9D" stroke-width="1.6" fill="none" />
<path d="M1311.5,111 Q1316.5,112 1315,121 Q1313.5,116 1310.5,114 Z" stroke="#A19F9D" stroke-width="1.2" fill="#A19F9D" />
<rect x="1294.2" y="124.3" width="23.8" height="5.3" fill="#B3B0AD" />
<path d="M1328.2,117.25 L1332.2,121.75 L1336.2,117.25" stroke="#A19F9D" stroke-width="1.5" fill="none" stroke-linecap="butt" stroke-linejoin="miter"/>
<path d="M1303,156 H1296.5 V141.5 H1309" stroke="#A19F9D" stroke-width="1.5" fill="none" />
<path d="M1302,155.5 L1303.5,150 L1314,139.5 Q1316,138.5 1317,140 Q1318,141.5 1317,143 L1306.5,153.5 Z" stroke="#A19F9D" stroke-width="1.4" fill="#ECEBEA" />
<rect x="1294.2" y="158.2" width="23.8" height="5.6" fill="#B3B0AD" />
<path d="M1328.2,151.25 L1332.2,155.75 L1336.2,151.25" stroke="#A19F9D" stroke-width="1.5" fill="none" stroke-linecap="butt" stroke-linejoin="miter"/>
<path d="M1295,188 L1301,178 H1315 L1318,182 L1313,194.5 H1299.5 Z" stroke="#8E8C8A" stroke-width="1.6" fill="#E1DFDD" stroke-linejoin="round"/>
<path d="M1295,188 H1308.5 L1313,194.5 H1299.5 Z" stroke="#8E8C8A" stroke-width="1.2" fill="#B8B6B4" />
<path d="M1308.5,188 L1315,178.5" stroke="#A19F9D" stroke-width="1.2" fill="none" />
<path d="M1324.2,185.05 L1328.2,189.55 L1332.2,185.05" stroke="#A19F9D" stroke-width="1.5" fill="none" stroke-linecap="butt" stroke-linejoin="miter"/>
<circle cx="1389.8" cy="114.2" r="7.4" fill="#FAFAFA" stroke="#3B3A39" stroke-width="1.8"/>
<path d="M1375.5,128.5 L1384.5,119.5" stroke="#3B3A39" stroke-width="1.8" fill="none" />
<text x="1401.55" y="125.50" font-family="Liberation Sans" font-size="17.53" font-weight="normal" font-style="normal" fill="#3B3A39" textLength="34.28" lengthAdjust="spacingAndGlyphs" >Find</text>
<text x="1381.17" y="152.00" font-family="Liberation Sans" font-size="17.15" font-weight="normal" font-style="normal" fill="#B146C2" textLength="10.64" lengthAdjust="spacingAndGlyphs" >b</text>
<text x="1388.14" y="163.70" font-family="Liberation Sans" font-size="14.77" font-weight="normal" font-style="normal" fill="#1F8AD2" textLength="7.77" lengthAdjust="spacingAndGlyphs" >c</text>
<path d="M1379.5,147.5 Q1373.8,149.5 1374,154 Q1374.5,158 1385,157.8 M1381.5,154.5 L1385,157.8 L1381.5,161" stroke="#1F8AD2" stroke-width="1.6" fill="none" />
<text x="1401.63" y="159.80" font-family="Liberation Sans" font-size="17.53" font-weight="normal" font-style="normal" fill="#3B3A39" textLength="61.11" lengthAdjust="spacingAndGlyphs" >Replace</text>
<path d="M1477.4,151.4 L1481.4,156.4 L1485.4,151.4" stroke="#3B3A39" stroke-width="1.5" fill="none" stroke-linecap="butt" stroke-linejoin="miter"/>
<path d="M1377.5,176 V196 L1382,191.5 L1385.5,198 L1388.5,196.5 L1385.5,190 H1392 Z" stroke="#3B3A39" stroke-width="1.6" fill="#FAFAFA" stroke-linejoin="miter"/>
<text x="1401.74" y="194.00" font-family="Liberation Sans" font-size="17.53" font-weight="normal" font-style="normal" fill="#3B3A39" textLength="46.38" lengthAdjust="spacingAndGlyphs" >Select</text>
<path d="M1454.4,184.75 L1458.4,189.25 L1462.4,184.75" stroke="#3B3A39" stroke-width="1.5" fill="none" stroke-linecap="butt" stroke-linejoin="miter"/>
<path d="M126,1010.3 H119.2 V993.6 H124.8 Q128.2,993.6 128.2,997.2 V1004.8 M128.2,997.2 Q128.2,993.6 131.6,993.6 H137.6 V1002" stroke="#3B3A39" stroke-width="1.6" fill="none" />
<path d="M126.6,1007.3 L131.3,1012 L139,1004.3" stroke="#3B3A39" stroke-width="1.6" fill="none" />
<circle cx="311.4" cy="994.9" r="2.6" fill="none" stroke="#3B3A39" stroke-width="1.6"/>
<path d="M311.4,997.6 Q307,997.6 304.6,995.9 Q302.2,994.8 302.3,997.4 Q302.6,999.2 307.7,1000 V1004.5 Q307.7,1006.5 306.6,1009 Q305.9,1011.6 309.4,1011" stroke="#3B3A39" stroke-width="1.6" fill="none" />
<path d="M311.4,997.6 Q315.8,997.6 318.2,995.9 Q320.6,994.8 320.5,997.4 Q320.2,999.2 315.1,1000 V1004" stroke="#3B3A39" stroke-width="1.6" fill="none" />
<path d="M312,1007.3 L316.5,1011.7 L324.4,1004" stroke="#3B3A39" stroke-width="1.6" fill="none" />
<path d="M870,1004 H893 M870,1008.5 H893 M870,1013 H893 M877,995 L881.5,990.5 L886,995" stroke="#3B3A39" stroke-width="1.5" fill="none" />
<path d="M967,993 H987 V1006 H976 L970,1011.5 V1006 H967 Z" stroke="#3B3A39" stroke-width="1.5" fill="none" stroke-linejoin="round"/>
<rect x="1115.5" y="993.5" width="20" height="16.5" fill="none" stroke="#3B3A39" stroke-width="1.6"/>
<path d="M1119.5,993.5 V1010 M1119.5,1006 H1135.5" stroke="#3B3A39" stroke-width="1.3" fill="none" />
<rect x="1123.5" y="997.5" width="8" height="4" fill="none" stroke="#3B3A39" stroke-width="1.3"/>
<rect x="1175.5" y="993.5" width="8.5" height="7" fill="none" stroke="#3B3A39" stroke-width="1.5"/>
<rect x="1186.5" y="993.5" width="8.5" height="7" fill="none" stroke="#3B3A39" stroke-width="1.5"/>
<rect x="1175.5" y="1003" width="8.5" height="7" fill="none" stroke="#3B3A39" stroke-width="1.5"/>
<rect x="1186.5" y="1003" width="8.5" height="7" fill="none" stroke="#3B3A39" stroke-width="1.5"/>
<path d="M1235,994.5 Q1240,993.5 1244.5,995.5 Q1249,993.5 1254,994.5 V1010 Q1249,1009 1244.5,1011 Q1240,1009 1235,1010 Z M1244.5,995.5 V1011" stroke="#3B3A39" stroke-width="1.5" fill="none" />
<path d="M1238,999 H1242 M1238,1002.5 H1242 M1238,1006 H1242 M1247,999 H1251 M1247,1002.5 H1251 M1247,1006 H1251" stroke="#3B3A39" stroke-width="1.1" fill="none" />
<path d="M1295,992 H1313.5 M1296.5,992 V1003.5 H1312 V992 M1304.2,1003.5 V1009.5 M1299,1010 H1309.5 M1300,996 H1307" stroke="#3B3A39" stroke-width="1.5" fill="none" />
<rect x="1343" y="1000.8" width="11.5" height="1.5" fill="#3B3A39" />
<rect x="1363" y="1000.5" width="148" height="2" fill="#3B3A39" />
<rect x="1407" y="993" width="8" height="17" fill="#3B3A39" />
<rect x="1436.5" y="997.5" width="1.5" height="8.5" fill="#3B3A39" />
<path d="M1519,1002 H1530.5 M1524.8,996.2 V1007.6" stroke="#3B3A39" stroke-width="1.4" fill="none" />
<rect x="1604.5" y="996.5" width="10" height="11" fill="none" stroke="#3B3A39" stroke-width="1.5"/>
<path d="M1606.5,993.5 L1609.5,990.5 L1612.5,993.5 M1606.5,1010 L1609.5,1013 L1612.5,1010 M1601.5,999 L1598.5,1002 L1601.5,1005 M1617.5,999 L1620.5,1002 L1617.5,1005" stroke="#3B3A39" stroke-width="1.5" fill="none" />
</svg>
</body></html>
